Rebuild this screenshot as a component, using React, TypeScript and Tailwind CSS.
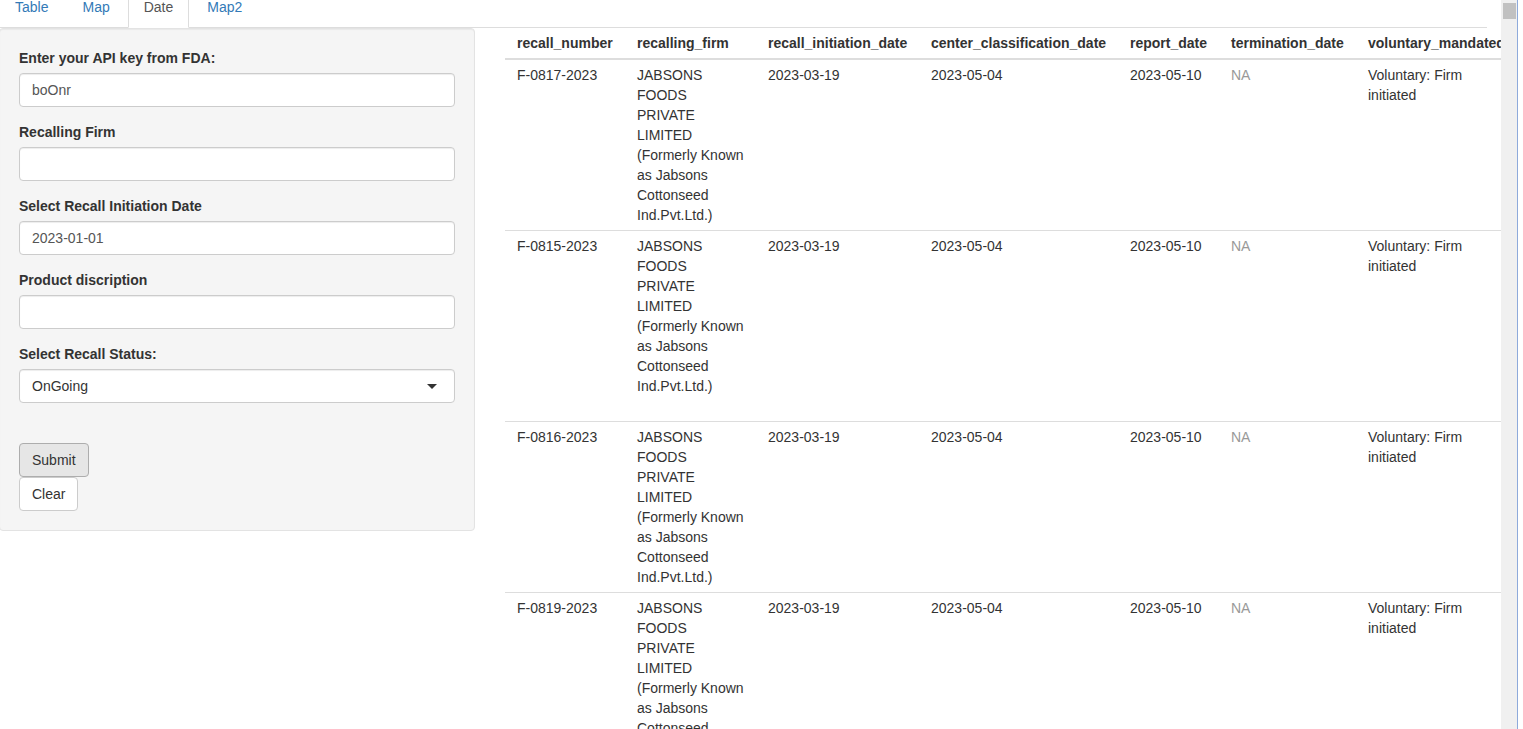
import React from 'react';

const tabs = ['Table', 'Map', 'Date', 'Map2'];

const columns = [
  { key: 'recall_number', width: 'w-[120px]' },
  { key: 'recalling_firm', width: 'w-[131px]' },
  { key: 'recall_initiation_date', width: 'w-[163px]' },
  { key: 'center_classification_date', width: 'w-[199px]' },
  { key: 'report_date', width: 'w-[101px]' },
  { key: 'termination_date', width: 'w-[137px]' },
  { key: 'voluntary_mandated', width: 'w-[164px]' },
];

const firm = 'JABSONS FOODS PRIVATE LIMITED (Formerly Known as Jabsons Cottonseed Ind.Pvt.Ltd.)';

const rows = [
  { id: 'F-0817-2023', tall: false },
  { id: 'F-0815-2023', tall: true },
  { id: 'F-0816-2023', tall: false },
  { id: 'F-0819-2023', tall: false },
];

const Field = ({ label, value }: { label: string; value?: string }) => (
  <div className="mb-[15px]">
    <label className="block mb-[5px] font-bold">{label}</label>
    <input
      readOnly
      value={value ?? ''}
      className="block w-full h-[34px] px-[12px] py-[6px] bg-white border border-[#ccc] rounded-[4px] text-[#555] shadow-[inset_0_1px_1px_rgba(0,0,0,0.075)] outline-none"
    />
  </div>
);

const App = () => {
  return (
    <div className="w-[1523px] h-[729px] overflow-hidden flex bg-white font-['Liberation_Sans',Arial,sans-serif] text-[14px] leading-[20px] text-[#333]">
      {/* page content */}
      <div className="w-[1501px] h-full overflow-hidden">
        <div className="-mt-[14px] pr-[14px]">
          {/* Tabs */}
          <ul className="flex border-b border-[#ddd] -ml-px">
            {tabs.map((t) => (
              <li key={t} className="mr-[2px] -mb-px">
                <a
                  className={
                    t === 'Date'
                      ? 'block px-[15px] py-[10px] border border-[#ddd] border-b-transparent rounded-t-[4px] bg-white text-[#555]'
                      : 'block px-[15px] py-[10px] border border-transparent rounded-t-[4px] text-[#337ab7]'
                  }
                >
                  {t}
                </a>
              </li>
            ))}
          </ul>

          <div className="flex items-start">
            {/* Sidebar */}
            <div className="w-[490px] shrink-0">
              <div className="-ml-px w-[476px] bg-[#f5f5f5] border border-[#e3e3e3] rounded-[4px] p-[19px] shadow-[inset_0_1px_1px_rgba(0,0,0,0.05)]">
                <Field label="Enter your API key from FDA:" value="boOnr" />
                <Field label="Recalling Firm" />
                <Field label="Select Recall Initiation Date" value="2023-01-01" />
                <Field label="Product discription" />
                <div className="mb-[15px]">
                  <label className="block mb-[5px] font-bold">Select Recall Status:</label>
                  <div className="flex items-center justify-between h-[34px] pl-[12px] pr-[17px] bg-white border border-[#ccc] rounded-[4px] shadow-[inset_0_1px_1px_rgba(0,0,0,0.075)]">
                    <span>OnGoing</span>
                    <span className="w-0 h-0 border-x-[5px] border-x-transparent border-t-[5px] border-t-[#333]" />
                  </div>
                </div>
                <div className="flex flex-col items-start mt-[40px]">
                  <button className="h-[34px] px-[12px] bg-[#e6e6e6] border border-[#adadad] rounded-[4px] text-[#333]">
                    Submit
                  </button>
                  <button className="h-[34px] px-[12px] bg-white border border-[#ccc] rounded-[4px] text-[#333]">
                    Clear
                  </button>
                </div>
              </div>
            </div>

            {/* Main panel */}
            <div className="flex-1 min-w-0 pl-[15px]">
              <table className="table-fixed w-[1015px] border-collapse text-left">
                <thead>
                  <tr>
                    {columns.map((c) => (
                      <th
                        key={c.key}
                        className={`${c.width} px-[12px] py-[5px] font-bold whitespace-nowrap border-b-2 border-[#ddd]`}
                      >
                        {c.key}
                      </th>
                    ))}
                  </tr>
                </thead>
                <tbody>
                  {rows.map((r) => (
                    <tr key={r.id} className="align-top">
                      <td className="px-[12px] py-[5px] border-t border-[#ddd]">
                        <div className={r.tall ? 'min-h-[180px]' : ''}>{r.id}</div>
                      </td>
                      <td className="px-[12px] py-[5px] border-t border-[#ddd]">{firm}</td>
                      <td className="px-[12px] py-[5px] border-t border-[#ddd]">2023-03-19</td>
                      <td className="px-[12px] py-[5px] border-t border-[#ddd]">2023-05-04</td>
                      <td className="px-[12px] py-[5px] border-t border-[#ddd]">2023-05-10</td>
                      <td className="px-[12px] py-[5px] border-t border-[#ddd] text-[#999]">NA</td>
                      <td className="px-[12px] py-[5px] border-t border-[#ddd]">Voluntary: Firm initiated</td>
                    </tr>
                  ))}
                </tbody>
              </table>
            </div>
          </div>
        </div>
      </div>

      {/* scrollbar */}
      <div className="w-[16px] h-full shrink-0 bg-[#f0f0f0] pt-[3px] pl-[2px] pr-[1px]">
        <div className="h-[16px] bg-[#c1c1c1]" />
      </div>
      <div className="w-px h-full shrink-0 bg-[#8eaadb]" />
      <div className="flex-1 h-full bg-white" />
    </div>
  );
};

export default App;
